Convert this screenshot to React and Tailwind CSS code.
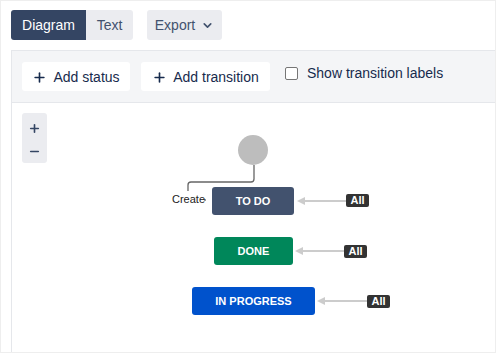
import { ChevronDown, Plus, Minus } from "lucide-react";

const FONT = { fontFamily: '"Liberation Sans", Arial, sans-serif' };

function StatusNode({ label, className }) {
  return (
    <div
      className={`absolute flex h-[28px] items-center justify-center rounded-[3px] text-[11px] font-bold text-white ${className}`}
    >
      {label}
    </div>
  );
}

function AllTag({ className }) {
  return (
    <div
      className={`absolute flex h-[13px] w-[23px] items-center justify-center rounded-[2px] bg-[#333333] text-[11px] font-bold leading-none text-white ${className}`}
    >
      All
    </div>
  );
}

export default function App() {
  return (
    <div
      className="flex h-[353px] w-[496px] flex-col overflow-hidden border border-[#eeeeee] bg-white pl-[10px] pt-[9px]"
      style={FONT}
    >
      {/* view tabs + export */}
      <div className="flex h-[30px] items-stretch text-[14px]">
        <button className="w-[75px] rounded-l-[3px] bg-[#344563] text-white">
          Diagram
        </button>
        <button className="w-[47px] rounded-r-[3px] bg-[#ebecf0] text-[#42526e]">
          Text
        </button>
        <button className="ml-[14px] flex w-[75px] items-center justify-center gap-[6px] rounded-[3px] bg-[#ebecf0] text-[#42526e]">
          Export
          <ChevronDown className="h-[13px] w-[13px]" strokeWidth={3} />
        </button>
      </div>

      {/* editor panel */}
      <div className="mt-[10px] flex flex-1 flex-col border-l border-t border-[#e5e7eb]">
        <div className="flex h-[52px] items-center gap-[11px] border-b border-[#e5e7eb] bg-[#f4f5f7] pl-[10px]">
          <button className="flex h-[29px] w-[108px] items-center justify-center gap-[6px] rounded-[3px] bg-white pt-[2px] text-[14px] text-[#172b4d]">
            <Plus className="h-[15px] w-[15px]" strokeWidth={2.6} />
            Add status
          </button>
          <button className="flex h-[29px] w-[129px] items-center justify-center gap-[6px] rounded-[3px] bg-white pt-[2px] text-[14px] text-[#172b4d]">
            <Plus className="h-[15px] w-[15px]" strokeWidth={2.6} />
            Add transition
          </button>
          <label className="ml-[4px] flex items-center gap-[9px] pb-[6px] text-[14px] text-[#172b4d]">
            <span className="h-[13px] w-[13px] rounded-[2px] border border-[#767676] bg-white" />
            Show transition labels
          </label>
        </div>

        {/* diagram canvas */}
        <div className="relative flex-1">
          <div className="absolute left-[10px] top-[10px] flex h-[50px] w-[25px] flex-col items-center justify-around rounded-[3px] bg-[#ebecf0] pt-[4px] text-[#344563]">
            <Plus className="h-[13px] w-[13px]" strokeWidth={3} />
            <Minus className="h-[13px] w-[13px]" strokeWidth={3} />
          </div>

          <svg className="absolute left-0 top-0" width="484" height="250">
            <circle cx="241" cy="47" r="15" fill="#bdbdbd" />
            <path
              d="M242 62 V76 Q242 79 239 79 H179 Q176 79 176 82 V88"
              fill="none"
              stroke="#666666"
              strokeWidth="1.3"
            />
            <circle cx="193" cy="97" r="0.9" fill="#666666" />
            <line x1="290" y1="98" x2="334" y2="98" stroke="#cccccc" strokeWidth="2" />
            <polygon points="285,98 293,94 293,102" fill="#cccccc" />
            <line x1="288" y1="148" x2="332" y2="148" stroke="#cccccc" strokeWidth="2" />
            <polygon points="283,148 291,144 291,152" fill="#cccccc" />
            <line x1="310" y1="198" x2="355" y2="198" stroke="#cccccc" strokeWidth="2" />
            <polygon points="305,198 313,194 313,202" fill="#cccccc" />
          </svg>

          <div className="absolute left-[160px] top-[88px] text-[11px] text-[#222222]">
            Create
          </div>

          <StatusNode label="TO DO" className="left-[200px] top-[84px] w-[82px] bg-[#42526e]" />
          <StatusNode label="DONE" className="left-[202px] top-[134px] w-[79px] bg-[#00875a]" />
          <StatusNode
            label="IN PROGRESS"
            className="left-[180px] top-[184px] w-[123px] bg-[#0052cc]"
          />

          <AllTag className="left-[334px] top-[91px]" />
          <AllTag className="left-[332px] top-[142px]" />
          <AllTag className="left-[355px] top-[192px]" />
        </div>
      </div>
    </div>
  );
}
